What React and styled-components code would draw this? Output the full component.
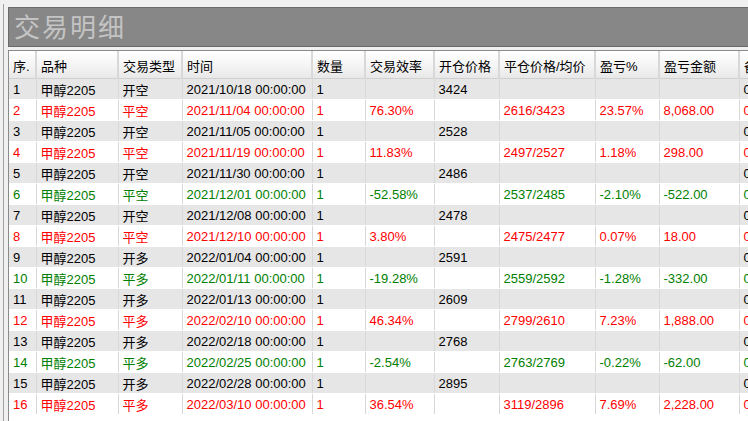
import styled, { createGlobalStyle } from 'styled-components'

const Global = createGlobalStyle`
  body { margin: 0; background: #f0f0f0; font-family: "Liberation Sans", "Noto Sans CJK SC", sans-serif; }
`

const Page = styled.div`
  width: 748px;
  height: 421px;
  overflow: hidden;
  display: flex;
  background: #f0f0f0;
`
const LeftEdge = styled.div`
  width: 3px;
  margin-top: 4px;
  border-right: 1px solid #a0a0a0;
  flex-shrink: 0;
`
const Panel = styled.div`
  margin: 7px 0 0 4px;
  flex: 1;
  display: flex;
  flex-direction: column;
  overflow: hidden;
`
const TitleBar = styled.div`
  height: 38px;
  background: #878787;
  border: 1px solid #6a6a6a;
  border-right: none;
  color: #c4c4c4;
  font-size: 26px;
  font-family: "Noto Sans CJK SC", sans-serif;
  line-height: 36px;
  padding-left: 5px;
  letter-spacing: 2px;
`
const Grid = styled.div`
  margin-top: 3px;
  flex: 1;
  background: #fff;
  border-left: 1px solid #8a8a8a;
  border-top: 1px solid #8a8a8a;
  overflow: hidden;
`
const Table = styled.table`
  border-collapse: collapse;
  table-layout: fixed;
  width: 800px;
  font-size: 13px;
  font-family: "Liberation Sans", "Noto Sans CJK SC", sans-serif;
`
const Th = styled.th`
  font-weight: normal;
  text-align: left;
  height: 25px;
  padding: 2px 0 0 4px;
  background: linear-gradient(#fff, #f3f3f3 60%, #e8e8e8);
  border-right: 2px solid #d8d8d8;
  border-bottom: 1px solid #d0d0d0;
  white-space: nowrap;
  overflow: hidden;
`
const Tr = styled.tr`
  background: ${p => (p.$odd ? '#e6e6e6' : '#fff')};
  color: ${p => p.$color};
`
const Td = styled.td`
  height: 20px;
  padding: 0 0 0 4px;
  border-right: 1px solid #d8d8d8;
  border-bottom: 1px solid #fff;
  white-space: nowrap;
  overflow: hidden;
`

const widths = [27, 82, 64, 130, 53, 69, 65, 96, 64, 80, 70]
const heads = ['序.', '品种', '交易类型', '时间', '数量', '交易效率', '开仓价格', '平仓价格/均价', '盈亏%', '盈亏金额', '备注']

const rows = [
  ['开空', '2021/10/18', '', '3424', '', '', ''],
  ['平空', '2021/11/04', '76.30%', '', '2616/3423', '23.57%', '8,068.00'],
  ['开空', '2021/11/05', '', '2528', '', '', ''],
  ['平空', '2021/11/19', '11.83%', '', '2497/2527', '1.18%', '298.00'],
  ['开空', '2021/11/30', '', '2486', '', '', ''],
  ['平空', '2021/12/01', '-52.58%', '', '2537/2485', '-2.10%', '-522.00'],
  ['开空', '2021/12/08', '', '2478', '', '', ''],
  ['平空', '2021/12/10', '3.80%', '', '2475/2477', '0.07%', '18.00'],
  ['开多', '2022/01/04', '', '2591', '', '', ''],
  ['平多', '2022/01/11', '-19.28%', '', '2559/2592', '-1.28%', '-332.00'],
  ['开多', '2022/01/13', '', '2609', '', '', ''],
  ['平多', '2022/02/10', '46.34%', '', '2799/2610', '7.23%', '1,888.00'],
  ['开多', '2022/02/18', '', '2768', '', '', ''],
  ['平多', '2022/02/25', '-2.54%', '', '2763/2769', '-0.22%', '-62.00'],
  ['开多', '2022/02/28', '', '2895', '', '', ''],
  ['平多', '2022/03/10', '36.54%', '', '3119/2896', '7.69%', '2,228.00'],
]

export default function App() {
  return (
    <Page>
      <Global />
      <LeftEdge />
      <Panel>
        <TitleBar>交易明细</TitleBar>
        <Grid>
          <Table>
            <colgroup>
              {widths.map((w, i) => <col key={i} style={{ width: w }} />)}
            </colgroup>
            <thead>
              <tr>{heads.map(h => <Th key={h}>{h}</Th>)}</tr>
            </thead>
            <tbody>
              {rows.map((r, i) => {
                const close = r[0].startsWith('平')
                const color = !close ? '#000' : r[2].startsWith('-') ? '#008000' : '#ff0000'
                return (
                  <Tr key={i} $odd={i % 2 === 0} $color={color}>
                    <Td>{i + 1}</Td>
                    <Td>甲醇2205</Td>
                    <Td>{r[0]}</Td>
                    <Td>{r[1]} 00:00:00</Td>
                    <Td>1</Td>
                    <Td>{r[2]}</Td>
                    <Td>{r[3]}</Td>
                    <Td>{r[4]}</Td>
                    <Td>{r[5]}</Td>
                    <Td>{r[6]}</Td>
                    <Td>0</Td>
                  </Tr>
                )
              })}
            </tbody>
          </Table>
        </Grid>
      </Panel>
    </Page>
  )
}
